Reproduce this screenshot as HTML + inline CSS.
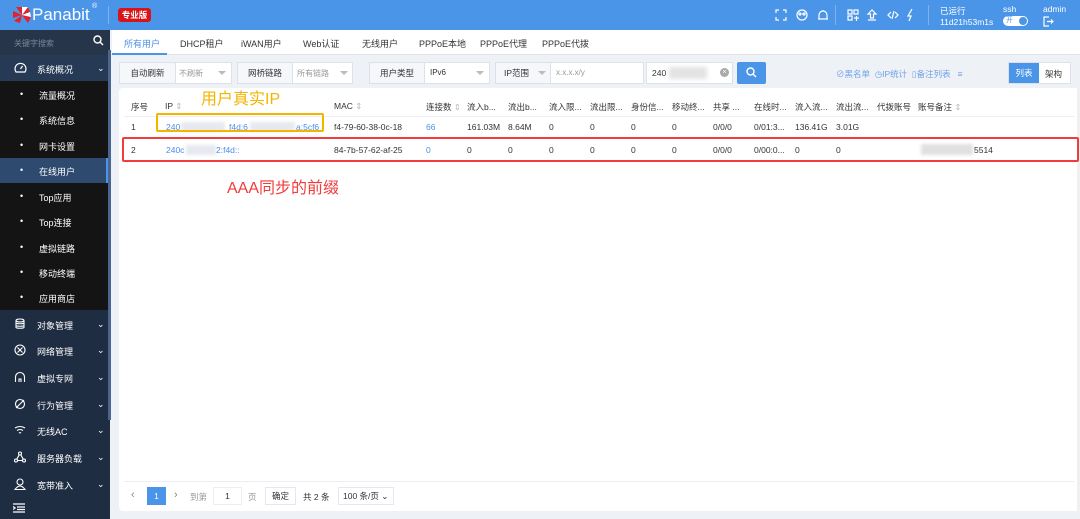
<!DOCTYPE html>
<html><head><meta charset="utf-8"><style>
*{margin:0;padding:0;box-sizing:border-box}
body{width:1080px;height:519px;overflow:hidden;background:#eef1f6;font-family:"Liberation Sans","Noto Sans CJK SC",sans-serif;font-size:9px;color:#333;position:relative}
.abs{position:absolute}
.hdr{left:0;top:0;width:1080px;height:30px;background:#4b95e9;color:#fff}
.side{left:0;top:30px;width:110px;height:489px;background:#1f2d42;color:#fff}
.sub{left:0;width:108px;height:25.5px;background:#141414}
.it{position:absolute;left:0;width:108px;font-size:9px;color:#fff}
.it svg{position:absolute;left:14px;top:-1px}
.box{background:#fff;border:1px solid #dde2ea;height:22px;top:62px}
.cell{position:absolute;font-size:8.5px;color:#333;white-space:nowrap}
.blue{color:#4b8fe6}
.arr{position:absolute;top:8px;width:0;height:0;border-left:4px solid transparent;border-right:4px solid transparent;border-top:4px solid #bbb}
.blur{position:absolute;background:#e6e9ef;filter:blur(1.5px)}
</style></head><body>
<div class="abs hdr">
 <svg class="abs" style="left:12px;top:6px" width="20" height="18" viewBox="0 0 20 18"><g fill="#e62129"><path d="M10 9 L4 1 L10 1Z"/><path d="M10 9 L16 1 L18 6Z"/><path d="M10 9 L19 11 L16 17Z"/><path d="M10 9 L8 17 L2 15Z"/><path d="M10 9 L1 12 L1 5Z"/></g><g fill="#fff"><path d="M10 9 L10 1 L16 1Z"/><path d="M10 9 L18 6 L19 11Z"/></g></svg>
 <div class="abs" style="left:32px;top:5px;font-size:17px;color:#fff">Panabit</div>
 <div class="abs" style="left:92px;top:3px;font-size:7px">®</div>
 <div class="abs" style="left:108px;top:6px;width:1px;height:18px;background:#7fb2ef"></div>
 <div class="abs" style="left:118px;top:8px;width:33px;height:14px;background:#d8141b;border-radius:3px;font-size:8.5px;text-align:center;line-height:14px;font-weight:bold">专业版</div>
 <svg class="abs" style="left:774px;top:8px" width="140" height="14" viewBox="0 0 140 14" fill="none" stroke="#fff" stroke-width="1.2">
  <path d="M2 5V2h3M9 2h3v3M12 9v3H9M5 12H2V9"/>
  <circle cx="28" cy="7" r="5"/><circle cx="26" cy="6" r="1"/><circle cx="30" cy="6" r="1"/>
  <path d="M44 11h10M45 11V7a4 4 0 0 1 8 0v4M49 3V2"/>
  <path d="M74 2h4v4h-4zM74 8h4v4h-4zM80 2h4v4h-4zM80 10h5M82.5 8v5"/>
  <path d="M98 2l-4 4h2.5v4h3V6H102zM94 12h8"/>
  <path d="M117 4l-3 3 3 3M121 4l3 3-3 3M120 3l-2 8"/>
  <path d="M140 1l-4 7h3l-2 5" transform="translate(-2 0)"/>
 </svg>
 <div class="abs" style="left:835px;top:5px;width:1px;height:20px;background:#7fb2ef"></div>
 <div class="abs" style="left:928px;top:5px;width:1px;height:20px;background:#7fb2ef"></div>
 <div class="abs" style="left:940px;top:5px;font-size:8.5px">已运行</div>
 <div class="abs" style="left:940px;top:17px;font-size:8.5px">11d21h53m1s</div>
 <div class="abs" style="left:1003px;top:4px;font-size:8.5px">ssh</div>
 <div class="abs" style="left:1003px;top:16px;width:25px;height:10px;background:#fff;border-radius:5px;color:#4b95e9;font-size:7px;line-height:10px;padding-left:3px">开<span style="position:absolute;right:1px;top:1px;width:8px;height:8px;border-radius:4px;background:#4b95e9"></span></div>
 <div class="abs" style="left:1043px;top:4px;font-size:8.5px">admin</div>
 <svg class="abs" style="left:1043px;top:16px" width="11" height="11" viewBox="0 0 11 11" fill="none" stroke="#fff" stroke-width="1.2"><path d="M6 1H1v9h5M4 5.5h6M8 3.5l2 2-2 2"/></svg>
</div>
<div class="abs side">
 <div class="abs" style="left:0;top:0;width:110px;height:25px;background:#263549"></div>
 <div class="abs" style="left:14px;top:8px;font-size:8px;color:#7a8699">关键字搜索</div>
 <svg class="abs" style="left:93px;top:5px" width="11" height="11" viewBox="0 0 11 11" fill="none" stroke="#fff" stroke-width="1.4"><circle cx="4.5" cy="4.5" r="3.5"/><path d="M7 7l3 3"/></svg>
 <div class="abs" style="left:0;top:25px;width:108px;height:26px;background:#263a55"></div>
 <div class="it" style="top:33px"><svg width="13" height="11" viewBox="0 0 13 11" fill="none" stroke="#fff" stroke-width="1.2"><path d="M2 10a5.5 5.5 0 1 1 9 0z"/><path d="M6.5 7l2-3"/></svg><span style="position:absolute;left:37px">系统概况</span><span style="position:absolute;left:97px">⌄</span></div>
 <div class="abs sub" style="top:51px;height:229px"></div>
 <div class="abs" style="left:0;top:128px;width:108px;height:25px;background:#2e4a6e;border-right:2px solid #4b95e9"></div>
 <div class="it" style="top:59px"><span style="position:absolute;left:20px">•</span><span style="position:absolute;left:39px">流量概况</span></div>
 <div class="it" style="top:84px"><span style="position:absolute;left:20px">•</span><span style="position:absolute;left:39px">系统信息</span></div>
 <div class="it" style="top:110px"><span style="position:absolute;left:20px">•</span><span style="position:absolute;left:39px">网卡设置</span></div>
 <div class="it" style="top:135px"><span style="position:absolute;left:20px">•</span><span style="position:absolute;left:39px">在线用户</span></div>
 <div class="it" style="top:161px"><span style="position:absolute;left:20px">•</span><span style="position:absolute;left:39px">Top应用</span></div>
 <div class="it" style="top:186px"><span style="position:absolute;left:20px">•</span><span style="position:absolute;left:39px">Top连接</span></div>
 <div class="it" style="top:212px"><span style="position:absolute;left:20px">•</span><span style="position:absolute;left:39px">虚拟链路</span></div>
 <div class="it" style="top:237px"><span style="position:absolute;left:20px">•</span><span style="position:absolute;left:39px">移动终端</span></div>
 <div class="it" style="top:262px"><span style="position:absolute;left:20px">•</span><span style="position:absolute;left:39px">应用商店</span></div>
 <div class="it" style="top:289px"><svg width="12" height="12" viewBox="0 0 12 12" fill="none" stroke="#fff" stroke-width="1.1"><ellipse cx="6" cy="2.5" rx="4" ry="1.5"/><path d="M2 2.5v7c0 1 8 1 8 0v-7M2 5c0 1 8 1 8 0M2 7.5c0 1 8 1 8 0"/></svg><span style="position:absolute;left:37px">对象管理</span><span style="position:absolute;left:97px">⌄</span></div>
 <div class="it" style="top:315px"><svg width="12" height="12" viewBox="0 0 12 12" fill="none" stroke="#fff" stroke-width="1.1"><circle cx="6" cy="6" r="5"/><path d="M3.5 3.5l5 5M8.5 3.5l-5 5"/></svg><span style="position:absolute;left:37px">网络管理</span><span style="position:absolute;left:97px">⌄</span></div>
 <div class="it" style="top:342px"><svg width="12" height="12" viewBox="0 0 12 12" fill="none" stroke="#fff" stroke-width="1.1"><path d="M1.5 11V6a4.5 4.5 0 0 1 9 0v5M5 11V8h2v3"/></svg><span style="position:absolute;left:37px">虚拟专网</span><span style="position:absolute;left:97px">⌄</span></div>
 <div class="it" style="top:369px"><svg width="12" height="12" viewBox="0 0 12 12" fill="none" stroke="#fff" stroke-width="1.1"><circle cx="6" cy="6" r="4.5"/><path d="M2 10L10 2"/></svg><span style="position:absolute;left:37px">行为管理</span><span style="position:absolute;left:97px">⌄</span></div>
 <div class="it" style="top:395px"><svg width="12" height="12" viewBox="0 0 12 12" fill="none" stroke="#fff" stroke-width="1.1"><path d="M1 4q5-3 10 0M3 6.5q3-2 6 0M5 9q1-.7 2 0"/></svg><span style="position:absolute;left:37px">无线AC</span><span style="position:absolute;left:97px">⌄</span></div>
 <div class="it" style="top:422px"><svg width="12" height="12" viewBox="0 0 12 12" fill="none" stroke="#fff" stroke-width="1.1"><circle cx="6" cy="2.5" r="1.5"/><circle cx="2" cy="9.5" r="1.5"/><circle cx="10" cy="9.5" r="1.5"/><path d="M5.2 3.8L2.8 8.2M6.8 3.8l2.4 4.4M3.5 9.5h5"/></svg><span style="position:absolute;left:37px">服务器负载</span><span style="position:absolute;left:97px">⌄</span></div>
 <div class="it" style="top:449px"><svg width="12" height="12" viewBox="0 0 12 12" fill="none" stroke="#fff" stroke-width="1.1"><circle cx="6" cy="4" r="3"/><path d="M1 11.5q5-7 10 0z"/></svg><span style="position:absolute;left:37px">宽带准入</span><span style="position:absolute;left:97px">⌄</span></div>
 <svg class="abs" style="left:13px;top:473px" width="12" height="10" viewBox="0 0 12 10" fill="none" stroke="#fff" stroke-width="1.3"><path d="M0 1h12M4 4h8M4 6.5h8M0 9h12M0 3.5l2 1.5-2 1.5"/></svg>
 <div class="abs" style="left:108px;top:20px;width:3px;height:370px;background:#4a6690"></div>
</div>
<!-- tabs -->
<div class="abs" style="left:112px;top:30px;width:968px;height:25px;background:#fff;border-bottom:1px solid #dfe4ec"></div>
<div class="abs" style="left:112px;top:53px;width:55px;height:2px;background:#4b95e9"></div>
<div class="abs" style="left:124px;top:37px;font-size:9px;color:#4b8fe6">所有用户</div>
<div class="abs" style="left:180px;top:37px;font-size:9px">DHCP租户</div>
<div class="abs" style="left:241px;top:37px;font-size:9px">iWAN用户</div>
<div class="abs" style="left:303px;top:37px;font-size:9px">Web认证</div>
<div class="abs" style="left:362px;top:37px;font-size:9px">无线用户</div>
<div class="abs" style="left:419px;top:37px;font-size:9px">PPPoE本地</div>
<div class="abs" style="left:480px;top:37px;font-size:9px">PPPoE代理</div>
<div class="abs" style="left:542px;top:37px;font-size:9px">PPPoE代拨</div>
<!-- filters -->
<div class="abs box" style="left:119px;width:113px"><span class="abs" style="left:0;top:0;width:56px;height:20px;background:#f5f7fa;border-right:1px solid #dde2ea;text-align:center;line-height:20px;font-size:8.5px">自动刷新</span><span class="abs" style="left:59px;top:5px;color:#999;font-size:8px">不刷新</span><span class="arr" style="left:98px"></span></div>
<div class="abs box" style="left:237px;width:116px"><span class="abs" style="left:0;top:0;width:55px;height:20px;background:#f5f7fa;border-right:1px solid #dde2ea;text-align:center;line-height:20px;font-size:8.5px">网桥链路</span><span class="abs" style="left:59px;top:5px;color:#999;font-size:8px">所有链路</span><span class="arr" style="left:102px"></span></div>
<div class="abs box" style="left:369px;width:121px"><span class="abs" style="left:0;top:0;width:55px;height:20px;background:#f5f7fa;border-right:1px solid #dde2ea;text-align:center;line-height:20px;font-size:8.5px">用户类型</span><span class="abs" style="left:60px;top:5px;font-size:8px">IPv6</span><span class="arr" style="left:106px"></span></div>
<div class="abs box" style="left:495px;width:149px"><span class="abs" style="left:0;top:0;width:55px;height:20px;background:#f5f7fa;border-right:1px solid #dde2ea;line-height:20px;font-size:8.5px;padding-left:8px">IP范围</span><span class="arr" style="left:42px"></span><span class="abs" style="left:60px;top:5px;color:#999;font-size:8px">x.x.x.x/y</span></div>
<div class="abs box" style="left:646px;width:87px"><span class="abs" style="left:5px;top:5px;font-size:8.5px">240</span><span class="abs" style="left:22px;top:4px;width:38px;height:12px;background:#e3e3e3;filter:blur(2px)"></span><span class="abs" style="left:73px;top:5px;width:9px;height:9px;border-radius:5px;background:#aaa;color:#fff;font-size:7px;line-height:9px;text-align:center">×</span></div>
<div class="abs" style="left:737px;top:62px;width:29px;height:22px;background:#4b95e9;border-radius:2px"><svg class="abs" style="left:9px;top:5px" width="11" height="11" viewBox="0 0 11 11" fill="none" stroke="#fff" stroke-width="1.4"><circle cx="4.5" cy="4.5" r="3.5"/><path d="M7 7l3 3"/></svg></div>
<div class="abs" style="left:836px;top:68px;font-size:8.5px;color:#6fa2e6">⊘黑名单 &nbsp;◷IP统计 &nbsp;▯备注列表 &nbsp;&nbsp;≡</div>
<div class="abs" style="left:1008px;top:62px;width:63px;height:22px;border:1px solid #dde2ea;background:#fff"><span class="abs" style="left:0;top:0;width:30px;height:20px;background:#4b95e9;color:#fff;text-align:center;line-height:20px;font-size:8.5px">列表</span><span class="abs" style="left:36px;top:5px;font-size:8.5px">架构</span></div>
<!-- table card -->
<div class="abs" style="left:119px;top:88px;width:962px;height:423px;background:#fff;border-radius:4px"></div>
<div class="abs" style="left:1077px;top:88px;width:3px;height:423px;background:#f0f0f0"></div>
<div class="abs" style="left:124px;top:116px;width:950px;height:1px;background:#ebeef5"></div>
<div class="abs" style="left:124px;top:137px;width:950px;height:1px;background:#ebeef5"></div>
<div class="abs" style="left:124px;top:160px;width:950px;height:1px;background:#ebeef5"></div>
<div class="cell" style="left:131px;top:101px">序号</div>
<div class="cell" style="left:165px;top:101px">IP <span style="color:#bbb">⇕</span></div>
<div class="cell" style="left:334px;top:101px">MAC <span style="color:#bbb">⇕</span></div>
<div class="cell" style="left:426px;top:101px">连接数 <span style="color:#bbb">⇕</span></div>
<div class="cell" style="left:467px;top:101px">流入b...</div>
<div class="cell" style="left:508px;top:101px">流出b...</div>
<div class="cell" style="left:549px;top:101px">流入限...</div>
<div class="cell" style="left:590px;top:101px">流出限...</div>
<div class="cell" style="left:631px;top:101px">身份信...</div>
<div class="cell" style="left:672px;top:101px">移动终...</div>
<div class="cell" style="left:713px;top:101px">共享 ...</div>
<div class="cell" style="left:754px;top:101px">在线时...</div>
<div class="cell" style="left:795px;top:101px">流入流...</div>
<div class="cell" style="left:836px;top:101px">流出流...</div>
<div class="cell" style="left:877px;top:101px">代拨账号</div>
<div class="cell" style="left:918px;top:101px">账号备注 <span style="color:#bbb">⇕</span></div>
<div class="cell" style="left:131px;top:122px">1</div>
<div class="blur" style="left:181px;top:122px;width:44px;height:10px"></div>
<div class="blur" style="left:250px;top:122px;width:45px;height:10px"></div>
<div class="cell blue" style="left:166px;top:122px">240</div>
<div class="cell blue" style="left:229px;top:122px">f4d:6</div>
<div class="cell blue" style="left:296px;top:122px">a:5cf6</div>
<div class="cell" style="left:334px;top:122px">f4-79-60-38-0c-18</div>
<div class="cell blue" style="left:426px;top:122px">66</div>
<div class="cell" style="left:467px;top:122px">161.03M</div>
<div class="cell" style="left:508px;top:122px">8.64M</div>
<div class="cell" style="left:549px;top:122px">0</div><div class="cell" style="left:590px;top:122px">0</div><div class="cell" style="left:631px;top:122px">0</div><div class="cell" style="left:672px;top:122px">0</div>
<div class="cell" style="left:713px;top:122px">0/0/0</div>
<div class="cell" style="left:754px;top:122px">0/01:3...</div>
<div class="cell" style="left:795px;top:122px">136.41G</div>
<div class="cell" style="left:836px;top:122px">3.01G</div>
<div class="cell" style="left:131px;top:145px">2</div>
<div class="blur" style="left:186px;top:145px;width:30px;height:10px"></div>
<div class="cell blue" style="left:166px;top:145px">240c</div>
<div class="cell blue" style="left:216px;top:145px">2:f4d::</div>
<div class="cell" style="left:334px;top:145px">84-7b-57-62-af-25</div>
<div class="cell blue" style="left:426px;top:145px">0</div>
<div class="cell" style="left:467px;top:145px">0</div><div class="cell" style="left:508px;top:145px">0</div><div class="cell" style="left:549px;top:145px">0</div><div class="cell" style="left:590px;top:145px">0</div><div class="cell" style="left:631px;top:145px">0</div><div class="cell" style="left:672px;top:145px">0</div>
<div class="cell" style="left:713px;top:145px">0/0/0</div>
<div class="cell" style="left:754px;top:145px">0/00:0...</div>
<div class="cell" style="left:795px;top:145px">0</div><div class="cell" style="left:836px;top:145px">0</div>
<div class="abs" style="left:921px;top:144px;width:52px;height:11px;background:#e0e0e0;filter:blur(1.5px)"></div>
<div class="cell" style="left:974px;top:145px">5514</div>
<!-- annotations -->
<div class="abs" style="left:156px;top:113px;width:168px;height:19px;border:2px solid #f5b400;border-radius:2px"></div>
<div class="abs" style="left:201px;top:85px;font-size:16px;color:#f5b400">用户真实IP</div>
<div class="abs" style="left:122px;top:137px;width:957px;height:25px;border:2px solid #f23b3b;border-radius:2px"></div>
<div class="abs" style="left:227px;top:174px;font-size:16px;color:#f23b3b">AAA同步的前缀</div>
<!-- pagination -->
<div class="abs" style="left:124px;top:481px;width:950px;height:1px;background:#ebeef5"></div>
<div class="abs" style="left:131px;top:489px;font-size:11px;color:#888">‹</div>
<div class="abs" style="left:147px;top:487px;width:19px;height:18px;background:#4b95e9;color:#fff;text-align:center;line-height:18px;font-size:8.5px">1</div>
<div class="abs" style="left:174px;top:489px;font-size:11px;color:#888">›</div>
<div class="abs" style="left:190px;top:491px;font-size:8.5px;color:#999">到第</div>
<div class="abs" style="left:213px;top:487px;width:29px;height:18px;border:1px solid #eee;text-align:center;line-height:16px;font-size:8.5px">1</div>
<div class="abs" style="left:248px;top:491px;font-size:8.5px;color:#999">页</div>
<div class="abs" style="left:265px;top:487px;width:31px;height:18px;border:1px solid #e4e7ed;text-align:center;line-height:16px;font-size:8.5px">确定</div>
<div class="abs" style="left:303px;top:491px;font-size:8.5px">共 2 条</div>
<div class="abs" style="left:338px;top:487px;width:56px;height:18px;border:1px solid #e4e7ed;line-height:16px;font-size:8.5px;padding-left:4px">100 条/页 ⌄</div>
</body></html>
